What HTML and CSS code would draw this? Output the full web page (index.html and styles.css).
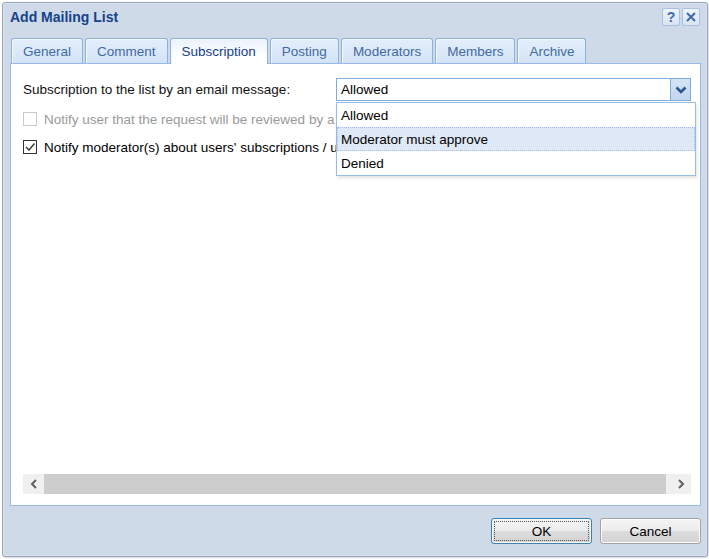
FILE: index.html
```html
<!DOCTYPE html>
<html>
<head>
<meta charset="utf-8">
<title>Add Mailing List</title>
<link rel="stylesheet" href="styles.css">
</head>
<body>
<div class="window">
  <div class="header">
    <div class="title">Add Mailing List</div>
    <div class="tools">
      <span class="tool tool-help">?</span>
      <span class="tool tool-close"><svg width="10" height="10" viewBox="0 0 10 10"><path d="M1 1 L9 9 M9 1 L1 9" stroke="#3d6aab" stroke-width="2" fill="none"/></svg></span>
    </div>
  </div>
  <div class="tabs">
    <div class="tab">General</div>
    <div class="tab">Comment</div>
    <div class="tab active">Subscription</div>
    <div class="tab">Posting</div>
    <div class="tab">Moderators</div>
    <div class="tab">Members</div>
    <div class="tab">Archive</div>
  </div>
  <div class="panel">
    <div class="form">
      <div class="row-combo">
        <label class="label">Subscription to the list by an email message:</label>
        <div class="combo">
          <div class="combo-input">Allowed</div>
          <div class="combo-trigger"><svg width="12" height="8" viewBox="0 0 12 8"><polyline points="1.5,1.5 6,6 10.5,1.5" stroke="#2b558f" stroke-width="2.6" fill="none"/></svg></div>
          <ul class="combo-list">
            <li class="combo-item">Allowed</li>
            <li class="combo-item selected">Moderator must approve</li>
            <li class="combo-item">Denied</li>
          </ul>
        </div>
      </div>
      <div class="check disabled">
        <span class="box"></span>
        <span class="check-label">Notify user that the request will be reviewed by a moderator</span>
      </div>
      <div class="check">
        <span class="box"><svg width="12" height="12" viewBox="0 0 12 12"><polyline points="2,6 5,9 10.5,2.5" stroke="#333" stroke-width="1.4" fill="none"/></svg></span>
        <span class="check-label">Notify moderator(s) about users' subscriptions / unsubscriptions</span>
      </div>
    </div>
    <div class="hscroll">
      <span class="hs-btn"><svg width="8" height="10" viewBox="0 0 8 10"><polyline points="6,1 2,5 6,9" stroke="#606060" stroke-width="2" fill="none"/></svg></span>
      <span class="hs-thumb"></span>
      <span class="hs-btn"><svg width="8" height="10" viewBox="0 0 8 10"><polyline points="2,1 6,5 2,9" stroke="#606060" stroke-width="2" fill="none"/></svg></span>
    </div>
  </div>
  <div class="footer">
    <button class="btn btn-ok"><span class="focus">OK</span></button>
    <button class="btn">Cancel</button>
  </div>
</div>
</body>
</html>
```

FILE: styles.css
```css
* { box-sizing: border-box; }
html, body { margin: 0; padding: 0; }
body {
  background: #ffffff;
  font-family: "Liberation Sans", Arial, sans-serif;
  font-size: 13.5px;
  color: #000;
  width: 709px;
  height: 559px;
  overflow: hidden;
}
.window {
  margin: 2px 0 0 2px;
  width: 706px;
  height: 555px;
  border: 1px solid #97a3b6;
  border-radius: 3px;
  background: #cedae7;
  padding: 0 6px 0 7px;
  display: flex;
  flex-direction: column;
  box-shadow: inset 0 0 0 1px #dbe4ef, 1px 1px 2px rgba(0,0,0,0.15);
}
.header {
  height: 35px;
  flex: none;
  display: flex;
  justify-content: space-between;
  align-items: flex-start;
}
.title {
  padding-top: 6px;
  font-size: 14px;
  line-height: 16px;
  font-weight: bold;
  color: #15428b;
}
.tools {
  display: flex;
  gap: 2px;
  padding-top: 5px;
  margin-right: 1px;
}
.tool {
  width: 18px;
  height: 18px;
  border: 1px solid #a9c0e0;
  border-radius: 2px;
  background: linear-gradient(#eef3fa, #d9e4f3);
  display: flex;
  align-items: center;
  justify-content: center;
}
.tool-help {
  font-weight: bold;
  font-size: 14px;
  color: #3d6aab;
  line-height: 16px;
}
.tabs {
  height: 26px;
  flex: none;
  display: flex;
  align-items: flex-end;
  padding-left: 1px;
  border-bottom: 1px solid #99bbe8;
}
.tab {
  height: 25px;
  padding: 0 11px;
  margin-right: 2px;
  border: 1px solid #8eb1e0;
  border-bottom: none;
  border-radius: 3px 3px 0 0;
  background: linear-gradient(#e4eefb, #d3e3f7);
  box-shadow: inset 1px 1px 0 #f4f8fe;
  color: #416aa3;
  line-height: 25px;
  white-space: nowrap;
}
.tab.active {
  height: 26px;
  margin-bottom: -1px;
  background: linear-gradient(#eaf2fd, #ffffff 70%);
  color: #15428b;
}
.panel {
  height: 442px;
  flex: none;
  background: #ffffff;
  border: 1px solid #99bbe8;
  border-top: none;
  display: flex;
  flex-direction: column;
}
.form {
  flex: 1;
  padding: 14px 0 0 12px;
}
.row-combo {
  display: grid;
  grid-template-columns: 313px 355px;
  height: 23px;
  align-items: center;
}
.label { color: #111; }
.combo {
  position: relative;
  height: 23px;
  display: flex;
}
.combo-input {
  flex: 1;
  border: 1px solid #7eadd9;
  border-right: none;
  padding-left: 4px;
  line-height: 21px;
  background: #fff;
}
.combo-trigger {
  width: 21px;
  border: 1px solid #7eadd9;
  background: linear-gradient(#d5e3f5, #c3d6ee);
  display: flex;
  align-items: center;
  justify-content: center;
}
.combo-list {
  position: absolute;
  top: 24px;
  left: 0;
  width: 360px;
  margin: 0;
  padding: 0;
  list-style: none;
  background: #fff;
  border: 1px solid #99bbe8;
  box-shadow: 1px 2px 3px rgba(0,0,0,0.12);
  z-index: 2;
}
.combo-item {
  height: 24px;
  line-height: 24px;
  padding-left: 3px;
  border: 1px solid transparent;
  white-space: nowrap;
}
.combo-item.selected {
  background: #dfe8f6;
  border: 1px dotted #a3bae9;
}
.check {
  height: 28px;
  display: flex;
  align-items: center;
  gap: 7px;
  white-space: nowrap;
}
.check.disabled { margin-top: 4px; }
.box {
  width: 14px;
  height: 14px;
  flex: none;
  border: 1px solid #333;
  background: #fff;
  display: flex;
  align-items: center;
  justify-content: center;
}
.check.disabled .box { border-color: #c9c9c9; }
.check.disabled .check-label { color: #9a9a9a; }
.hscroll {
  height: 20px;
  margin: 0 9px 11px 12px;
  background: #f0f0f0;
  display: flex;
  align-items: stretch;
}
.hs-btn {
  width: 21px;
  flex: none;
  display: flex;
  align-items: center;
  justify-content: center;
}
.hs-thumb {
  flex: 1;
  background: #cdcdcd;
  margin-right: 4px;
}
.footer {
  flex: 1;
  display: flex;
  justify-content: flex-end;
  align-items: flex-start;
  gap: 8px;
  padding-top: 12px;
}
.btn {
  width: 101px;
  height: 26px;
  padding: 0;
  border: 1px solid #a3a3a3;
  border-radius: 3px;
  background: linear-gradient(#f4f4f4 0%, #ececec 48%, #dcdcdc 52%, #d3d3d3 100%);
  box-shadow: inset 0 0 0 1px #fbfbfb;
  font-family: "Liberation Sans", Arial, sans-serif;
  font-size: 13.5px;
  color: #000;
}
.btn-ok {
  border-color: #3c7fb1;
  display: flex;
  padding: 2px;
}
.btn-ok .focus {
  flex: 1;
  border: 1px dotted #555;
  display: flex;
  align-items: center;
  justify-content: center;
}
```
